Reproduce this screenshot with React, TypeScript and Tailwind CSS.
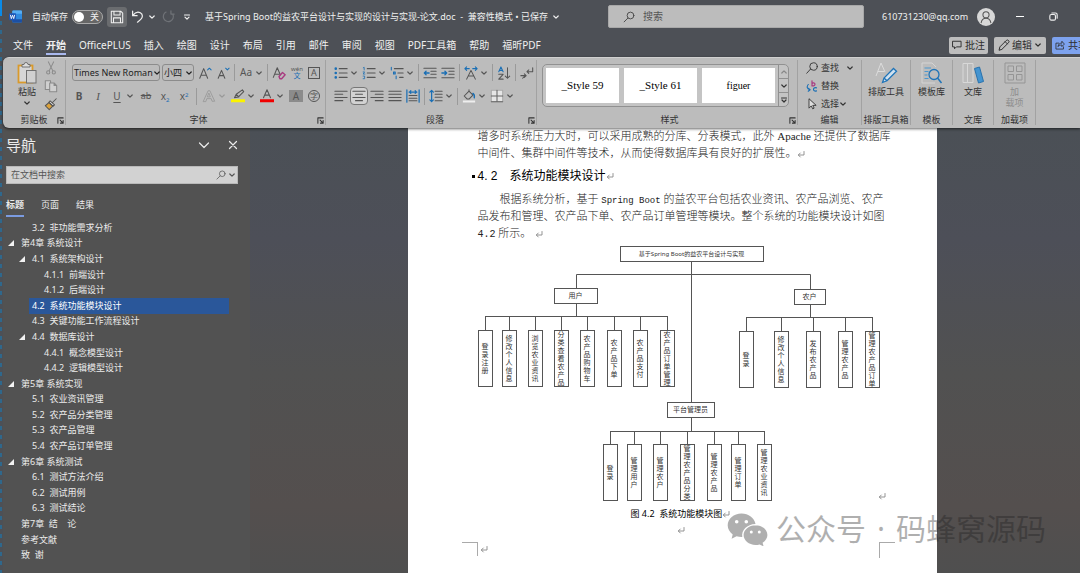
import React from "react";
import type { ReactNode } from "react";

function Svg({ className = "h-3.5 w-3.5", box = "0 0 16 16", children }: { className?: string; box?: string; children: ReactNode }) {
  return (
    <svg viewBox={box} className={"shrink-0 " + className} fill="none" stroke="currentColor" strokeWidth="1.2" strokeLinecap="round" strokeLinejoin="round" aria-hidden="true">
      {children}
    </svg>
  );
}

function Chevron({ className = "h-2 w-2" }: { className?: string }) {
  return (
    <Svg className={className} box="0 0 8 8">
      <path d="M1.8 3l2.2 2.2L6.2 3" />
    </Svg>
  );
}

function Tool({ label, drop, className = "", children }: { label: string; drop?: boolean; className?: string; children: ReactNode }) {
  return (
    <button type="button" aria-label={label} className={"flex shrink-0 items-center gap-0.5 " + className}>
      {children}
      {drop && <Chevron />}
    </button>
  );
}

function Rule() {
  return <span className="h-[17px] w-px shrink-0 bg-[#9a9a9a]" />;
}

function Group({ label, launcher, className, children }: { label: string; launcher?: boolean; className: string; children: ReactNode }) {
  return (
    <section aria-label={label} className={"flex shrink-0 flex-col border-r border-[#a2a2a2] " + className}>
      <div className="flex-1">{children}</div>
      <div className="grid h-2.5 grid-cols-[1fr_auto_1fr] items-center text-[9px] leading-[10px] text-[#333]">
        <span />
        <span className="whitespace-nowrap">{label}</span>
        {launcher ? (
          <button type="button" aria-label={label + "设置"} className="mr-[1px] justify-self-end">
            <Svg className="h-[7px] w-[7px]" box="0 0 8 8">
              <path d="M1 7V1h6M3.5 3.5L7 7M7 4v3H4" />
            </Svg>
          </button>
        ) : (
          <span />
        )}
      </div>
    </section>
  );
}

function Lines({ rows }: { rows: [number, number][] }) {
  return (
    <Svg>
      {rows.map(([a, b], i) => (
        <path key={i} d={`M${a} ${2.5 + i * 3.6}H${b}`} stroke="#555" />
      ))}
    </Svg>
  );
}

const BLUE = "#1a6fb5";

function TitleBar() {
  return (
    <div className="grid h-[33px] grid-cols-[605fr_256fr_216fr] items-center text-[9px] text-[#f0f0f0]">
      <div className="flex items-center pl-1.5">
        <svg viewBox="0 0 24 24" className="h-[13px] w-[13px]" aria-label="Word">
          <rect x="6" y="1" width="18" height="22" rx="2" fill="#2f8be0" />
          <path d="M6 3a2 2 0 012-2h14a2 2 0 012 2v4H6z" fill="#56aef4" />
          <path d="M6 17h18v4a2 2 0 01-2 2H8a2 2 0 01-2-2z" fill="#1c4fa3" />
          <rect x="0" y="6" width="13" height="13" rx="1.5" fill="#1b56b8" />
          <path d="M2.5 9l1.8 7 2.2-6.5L8.7 16l1.8-7" fill="none" stroke="#fff" strokeWidth="1.6" />
        </svg>
        <label htmlFor="autosave" className="ml-2.5 whitespace-nowrap">自动保存</label>
        <button id="autosave" type="button" role="switch" aria-checked="false" className="ml-1 flex h-3.5 w-[31px] items-center justify-between rounded-full border border-[#aaa] bg-[#666] pl-px pr-[3px]">
          <span className="h-2.5 w-2.5 rounded-full bg-white" />
          <span className="leading-none">关</span>
        </button>
        <button type="button" aria-label="保存" className="ml-1 flex h-5 w-5 items-center justify-center rounded-[3px] bg-[#6a6c6f]">
          <Svg>
            <path d="M1.5 1.5h11l2 2v11h-13zM4.5 1.8v4h7v-4M4 14.3V9h8v5.3" />
          </Svg>
        </button>
        <button type="button" aria-label="撤销" className="ml-1 flex items-center gap-1">
          <Svg className="h-[13px] w-[13px]">
            <path d="M2 1.5v5.500h5.500M2.300 6.700C5 3 8.500 1.800 11.500 3.500c3.500 2 3 5.800.5 8l-4 3.500" strokeWidth="1.5" />
          </Svg>
          <Chevron />
        </button>
        <button type="button" aria-label="恢复" className="ml-1.5 text-[#6f7277]">
          <Svg className="h-[13px] w-[13px]">
            <path d="M11 1v4h4M13.500 5.500A6.200 6.200 0 1 1 5 2.500" strokeWidth="1.5" />
          </Svg>
        </button>
        <button type="button" aria-label="自定义快速访问工具栏" className="ml-2">
          <Svg className="h-2 w-2" box="0 0 8 8">
            <path d="M1.500 2h5M2 4.200l2 2 2-2" />
          </Svg>
        </button>
        <button type="button" className="ml-3.5 flex items-center gap-1 whitespace-nowrap">
          <span>基于Spring Boot的益农平台设计与实现的设计与实现-论文.doc&nbsp; - &nbsp;兼容性模式 • 已保存</span>
          <Chevron />
        </button>
      </div>
      <label className="flex h-[23px] items-center rounded-[2px] border border-[#a8a8a8] bg-[#bcbcbc] pl-3.5 text-[#444]">
        <Svg className="h-3 w-3">
          <circle cx="10" cy="6" r="4.500" />
          <path d="M6.500 9.500L1.500 14.500" />
        </Svg>
        <input aria-label="搜索" placeholder="搜索" className="ml-2 min-w-0 flex-1 bg-transparent text-[10px] outline-none placeholder:text-[#555]" />
      </label>
      <div className="flex items-center pl-[18px]">
        <span className="w-[88px] whitespace-nowrap">610731230@qq.com</span>
        <button type="button" aria-label="账户" className="ml-[7px] flex h-[18px] w-[18px] items-center justify-center rounded-full bg-[#d8d8d8] text-[#555]">
          <Svg className="h-3.5 w-3.5">
            <circle cx="8" cy="5.500" r="3.500" />
            <path d="M2.500 14.500c.6-3.500 2.500-5 5.500-5s4.900 1.500 5.500 5" />
          </Svg>
        </button>
        <button type="button" aria-label="最小化" className="ml-[21px] flex h-4 w-2 items-center">
          <span className="block h-px w-full bg-white" />
        </button>
        <button type="button" aria-label="还原" className="ml-[25px]">
          <Svg className="h-[9px] w-[9px]">
            <rect x="1.500" y="4.500" width="10" height="10" rx="2.500" strokeWidth="2" />
            <path d="M5 1.800h6.500a3 3 0 013 3V11" strokeWidth="2" />
          </Svg>
        </button>
      </div>
    </div>
  );
}

const tabs = ["文件", "开始", "OfficePLUS", "插入", "绘图", "设计", "布局", "引用", "邮件", "审阅", "视图", "PDF工具箱", "帮助", "福昕PDF"];

function TabBar() {
  return (
    <div className="flex h-6 items-center">
      <nav className="flex flex-1 items-center gap-[13px] whitespace-nowrap pl-2.5 text-[10px] text-[#f0f0f0]">
        {tabs.map((t) => (
          <button key={t} type="button" className={t === "开始" ? "border-b-2 border-[#a9b8ee] pt-0.5 font-bold leading-[15px]" : "leading-[15px]"}>
            {t}
          </button>
        ))}
      </nav>
      <div className="flex w-[131px] shrink-0 gap-1.5 overflow-hidden text-[10px] text-[#2d2d2d]">
        <button type="button" className="flex h-[17px] w-[39px] shrink-0 items-center justify-center gap-[3px] whitespace-nowrap rounded-[2px] bg-[#bdbdbd]">
          <Svg className="h-2.5 w-2.5">
            <path d="M1.500 2h13v9H7l-3 3v-3H1.500z" strokeWidth="1.500" />
          </Svg>
          批注
        </button>
        <button type="button" className="flex h-[17px] w-[52px] shrink-0 items-center justify-center gap-0.5 whitespace-nowrap rounded-[2px] bg-[#bdbdbd]">
          <Svg className="h-3 w-3">
            <path d="M1.500 14.500l1-4L11 2a2 2 0 013 3l-8.500 8.500zM9.500 3.500l3 3" strokeWidth="1.300" />
          </Svg>
          编辑
          <Chevron />
        </button>
        <button type="button" className="flex h-[17px] w-12 shrink-0 items-center gap-[3px] whitespace-nowrap rounded-[2px] bg-[#7da2ee] pl-[3px]">
          <Svg className="h-2.5 w-2.5">
            <path d="M6 5H1.500v9.500h12V11M5 10c.5-3.500 2.500-5 6-5V2l4 4.500-4 4V8C8.500 8 6.500 8.500 5 10z" strokeWidth="1.300" />
          </Svg>
          共享
        </button>
      </div>
    </div>
  );
}

function FontGroup() {
  return (
    <Group label="字体" launcher className="w-[260px] pl-1.5">
      <div className="mt-1 flex h-[17px] items-center gap-1 text-[#555]">
        <div className="flex gap-0.5 text-[9px] text-[#222]">
          <button type="button" aria-label="字体" className="flex h-[17px] w-[88px] items-center justify-between whitespace-nowrap rounded-[3px] border border-[#8c8c8c] pl-px">
            Times New Roman
            <Chevron />
          </button>
          <button type="button" aria-label="字号" className="flex h-[17px] w-8 items-center justify-between whitespace-nowrap rounded-[3px] border border-[#8c8c8c] pl-px">
            小四
            <Chevron />
          </button>
        </div>
        <Tool label="增大字号">
          <Svg>
            <path d="M2 14L6.500 3 11 14M3.600 10.500h5.800" />
            <path d="M11 4.500l2-2 2 2" stroke={BLUE} />
          </Svg>
        </Tool>
        <Tool label="减小字号">
          <Svg>
            <path d="M2.500 14l3.800-9 3.800 9M3.800 11h5" />
            <path d="M11 2.500l2 2 2-2" stroke={BLUE} />
          </Svg>
        </Tool>
        <Rule />
        <Tool label="更改大小写" drop>
          <span className="w-3.5 text-[10px]">Aa</span>
        </Tool>
        <Rule />
        <Tool label="清除所有格式">
          <Svg>
            <path d="M1.500 13L6 2l3.500 8M3 9.500h5" />
            <path d="M8 12l4-4.500 3 2.500-4 4.500H9z" stroke="#a93a80" strokeWidth="1.600" />
          </Svg>
        </Tool>
        <Tool label="拼音指南">
          <span className="flex w-3.5 flex-col items-center text-[6px] leading-[6px]">
            <span>wén</span>
            <span className="text-[7px] leading-[7px] text-[#1a6fb5]">文</span>
          </span>
        </Tool>
        <Tool label="字符边框">
          <span className="flex h-3 w-3 items-center justify-center border border-[#555] text-[9px] leading-none">A</span>
        </Tool>
      </div>
      <div className="mt-1.5 flex h-[18px] items-center gap-[5px] text-[10px] text-[#555]">
        <Tool label="加粗"><span className="w-3.5 text-center font-bold">B</span></Tool>
        <Tool label="倾斜"><span className="w-3.5 text-center font-['Liberation_Serif',serif] text-[11px] italic">I</span></Tool>
        <Tool label="下划线" drop><span className="w-3.5 text-center underline underline-offset-2">U</span></Tool>
        <Tool label="删除线"><span className="w-3.5 text-center text-[9px] line-through">ab</span></Tool>
        <Tool label="下标"><span className="w-3.5 text-center leading-none">x<sub className="text-[6px] text-[#1a6fb5]">2</sub></span></Tool>
        <Tool label="上标"><span className="w-3.5 text-center leading-none">x<sup className="text-[6px] text-[#1a6fb5]">2</sup></span></Tool>
        <Rule />
        <Tool label="文本效果" drop className="text-[#999]">
          <Svg><path d="M1.500 14L7 2h2l5.500 12h-3l-1-3h-5l-1 3zM6.500 9h3L8 5z" strokeWidth="1" /></Svg>
        </Tool>
        <Tool label="文本突出显示颜色" drop>
          <Svg>
            <path d="M4 10l2-4 7-5 1.500 2-6 6zM6 6l3 3" />
            <path d="M0 13.500h16" stroke="#fbf300" strokeWidth="3.500" strokeLinecap="butt" />
          </Svg>
        </Tool>
        <Tool label="字体颜色" drop>
          <Svg>
            <path d="M4 10L8 0.800 12 10M5.500 7h5" />
            <path d="M0 13.500h16" stroke="#f00000" strokeWidth="3.500" strokeLinecap="butt" />
          </Svg>
        </Tool>
        <Tool label="字符底纹"><span className="flex h-3 w-3.5 items-center justify-center bg-[#8b8b8b] leading-none">A</span></Tool>
        <Tool label="带圈字符"><span className="flex h-3 w-3 items-center justify-center rounded-full border border-[#555] text-[8px] leading-none">字</span></Tool>
      </div>
    </Group>
  );
}

function ParagraphGroup() {
  return (
    <Group label="段落" launcher className="w-[211px] pl-2">
      <div className="mt-1 flex h-[17px] items-center gap-1 text-[#555]">
        <Tool label="项目符号" drop>
          <Svg>
            <path d="M6 3h9M6 8h9M6 13h9" />
            <path d="M2 3h.01M2 8h.01M2 13h.01" stroke={BLUE} strokeWidth="3" />
          </Svg>
        </Tool>
        <Tool label="编号" drop>
          <Svg>
            <path d="M6 3h9M6 8h9M6 13h9" />
            <path d="M1.500 2l1-.5v3M1.300 6.800h1.700l-1.700 2.400h2M1.300 11.500h1.700v3H1.300" stroke={BLUE} strokeWidth="0.900" />
          </Svg>
        </Tool>
        <Tool label="多级列表" drop>
          <Svg>
            <path d="M5 3h10M9 8h6M11 13h4" />
            <path d="M1.500 1.500v3M4 7h2v2H4zM7 11.500v3" stroke={BLUE} />
          </Svg>
        </Tool>
        <Rule />
        <Tool label="减少缩进量">
          <Svg>
            <path d="M1 2.500h14M9 6h6M9 9.500h6M1 13.500h14" />
            <path d="M7 8H1.500M3.500 6l-2 2 2 2" stroke={BLUE} strokeWidth="1.500" />
          </Svg>
        </Tool>
        <Tool label="增加缩进量">
          <Svg>
            <path d="M1 2.500h14M9 6h6M9 9.500h6M1 13.500h14" />
            <path d="M1 8h5.500M4.500 6l2 2-2 2" stroke={BLUE} strokeWidth="1.500" />
          </Svg>
        </Tool>
        <Rule />
        <Tool label="中文版式" drop>
          <Svg>
            <path d="M3 15L8 5l5 10M5 11.500h6" />
            <path d="M1 3h5M3 1L1 3l2 2M10 3h5M13 1l2 2-2 2" stroke={BLUE} />
          </Svg>
        </Tool>
        <Rule />
        <Tool label="排序">
          <Svg>
            <path d="M2 6.500L4.500 1 7 6.500M3 5h3" stroke={BLUE} />
            <path d="M2 9.500h5l-5 5.500h5M12 2v12M9.500 11.500L12 14l2.500-2.500" />
          </Svg>
        </Tool>
        <Rule />
        <Tool label="显示编辑标记">
          <Svg><path d="M1 11h6M5 9l2 2-2 2M14.500 2v4.500H8M10 4.500L8 6.500l2 2M3 14l3-3" /></Svg>
        </Tool>
      </div>
      <div className="mt-1.5 flex h-[18px] items-center gap-1 text-[#555]">
        <Tool label="左对齐"><Lines rows={[[1, 15], [1, 10], [1, 15], [1, 10]]} /></Tool>
        <button type="button" aria-label="居中" aria-pressed="true" className="-mx-0.5 flex h-[18px] w-[18px] shrink-0 items-center justify-center rounded-[4px] border border-[#777] bg-[#d2d2d2]">
          <Lines rows={[[1, 15], [4, 12], [1, 15], [4, 12]]} />
        </button>
        <Tool label="右对齐"><Lines rows={[[1, 15], [6, 15], [1, 15], [6, 15]]} /></Tool>
        <Tool label="两端对齐"><Lines rows={[[1, 15], [1, 15], [1, 15], [1, 15]]} /></Tool>
        <Tool label="分散对齐">
          <Svg>
            <path d="M1 1v14M15 1v14M3.500 3.500h9M4 3.500L5.500 2M4 3.500L5.500 5M12 3.500L10.500 2M12 3.500L10.500 5" stroke={BLUE} strokeWidth="1.400" />
            <path d="M3.500 7.500h9M3.500 10.500h9M3.500 13.500h9" />
          </Svg>
        </Tool>
        <Rule />
        <Tool label="行距" drop>
          <Svg>
            <path d="M7 2.500h8M7 6h8M7 9.500h8M7 13.500h8" />
            <path d="M3 1.500v13M1 3.500l2-2 2 2M1 12.500l2 2 2-2" stroke={BLUE} strokeWidth="1.400" />
          </Svg>
        </Tool>
        <Rule />
        <Tool label="底纹" drop>
          <Svg>
            <path d="M2.500 8L8 2.500l4.500 4.500L8 11.500H6zM8 2.500V1" />
            <path d="M12.500 5c1.500 1 2 2.500 1.500 5" stroke={BLUE} strokeWidth="1.600" />
            <path d="M1 14.200h14" stroke="#eee" strokeWidth="2.200" strokeLinecap="butt" />
          </Svg>
        </Tool>
        <Tool label="边框" drop>
          <Svg>
            <path d="M1.500 1.500h13v13h-13z" fill="#e6e6e6" stroke="#aaa" />
            <path d="M8 1.500v13M1.500 8h13M1.500 14.500h13" stroke="#666" />
          </Svg>
        </Tool>
      </div>
    </Group>
  );
}

function BigTool({ icon, lines, muted }: { icon: ReactNode; lines: string[]; muted?: boolean }) {
  return (
    <button type="button" className={"mx-auto flex flex-col items-center pt-0.5 text-[9px] leading-[11px] " + (muted ? "text-[#8d8d8d]" : "text-[#333]")}>
      {icon}
      <span className="mt-0.5 flex flex-col whitespace-nowrap">
        {lines.map((l) => (
          <span key={l}>{l}</span>
        ))}
      </span>
    </button>
  );
}

function Ribbon() {
  return (
    <div className="relative z-10 flex h-[71px] overflow-hidden rounded-l-[6px] border-t border-[#d0d0d0] bg-[#bcbcbc] py-[2px] pb-[3px] shadow-[0_1px_3px_rgba(0,0,0,0.6)]">
      <Group label="剪贴板" launcher className="w-[63px]">
        <div className="flex pl-[9px]">
          <button type="button" className="flex w-[30px] flex-col items-center pt-0.5 text-[9px] leading-[11px] text-[#333]">
            <svg viewBox="0 0 20 22" className="h-[22px] w-5" aria-hidden="true">
              <rect x="1.500" y="3.500" width="14" height="17" fill="#d6d6d6" stroke="#d99a2b" strokeWidth="1.800" />
              <path d="M5 5V2.500h2a2 2 0 014 0h2V5z" fill="#ddd" stroke="#666" strokeWidth="0.900" />
              <rect x="9.500" y="8.500" width="9.500" height="12.500" fill="#d0d0d0" stroke="#707070" />
            </svg>
            <span className="mt-0.5">粘贴</span>
            <Chevron className="mt-0.5 h-2 w-2" />
          </button>
          <div className="ml-0.5 flex flex-col gap-0.5 text-[#8a8a8a]">
            <Tool label="剪切" className="h-4">
              <Svg><path d="M5 1l5 10M11 1L6 11" /><circle cx="4.800" cy="13" r="1.800" /><circle cx="11.200" cy="13" r="1.800" /></Svg>
            </Tool>
            <Tool label="复制" className="h-4">
              <Svg><path d="M6.500 12H1.500V2h6v2.500M6.500 4.500h5l3 3v7h-8zM11.500 4.500v3h3" fill="#cfcfcf" /></Svg>
            </Tool>
            <Tool label="格式刷" className="h-4 text-[#555]">
              <Svg>
                <path d="M10 6l4-4M7 4.500L12 9l-1.500 1.500-5-4.500z" fill="#eee" />
                <path d="M5.500 6.500L1.500 10l4.500 4.500 4-4z" fill="#dca23a" />
              </Svg>
            </Tool>
          </div>
        </div>
      </Group>
      <FontGroup />
      <ParagraphGroup />
      <Group label="样式" launcher className="w-[261px] pl-[5px]">
        <div className="mt-1 flex h-[43px] w-[247px] rounded-[5px] border border-[#919191] bg-[#c4c4c4]">
          <div className="flex flex-1 gap-[5px] p-[3px] font-['Liberation_Serif',serif] text-[11px] text-black">
            {["_Style 59", "_Style 61", "figuer"].map((s) => (
              <button key={s} type="button" className={"w-[73px] bg-white " + (s === "figuer" ? "text-[10px]" : "")}>{s}</button>
            ))}
          </div>
          <div className="flex w-[11px] flex-col divide-y divide-[#919191] border-l border-[#919191] text-[#333]">
            <button type="button" aria-label="上一行" className="flex flex-1 items-center justify-center text-[#888]"><Chevron className="h-2 w-2 rotate-180" /></button>
            <button type="button" aria-label="下一行" className="flex flex-1 items-center justify-center"><Chevron /></button>
            <button type="button" aria-label="其他" className="flex flex-1 items-center justify-center">
              <Svg className="h-2 w-2" box="0 0 8 8"><path d="M1.500 2h5M2 4l2 2 2-2" /></Svg>
            </button>
          </div>
        </div>
      </Group>
      <Group label="编辑" className="w-16">
        <div className="flex flex-col gap-0.5 pl-2 text-[9px] leading-4 text-[#333]">
          <button type="button" className="flex h-4 items-center gap-[3px]">
            <Svg className="h-3 w-3"><circle cx="10" cy="6" r="5" /><path d="M6 9.500L1 15" /></Svg>
            查找
            <Chevron className="ml-1 h-2 w-2" />
          </button>
          <button type="button" className="flex h-4 items-center gap-[3px]">
            <Svg className="h-3 w-3">
              <path d="M8 1v7M8 5c1-2 4-1.500 4 .7S9 8.500 8 7" stroke="#a93a80" strokeWidth="1.600" />
              <path d="M3 6c-2.500 3-1.500 6 2 7M3 11l2.500 2L3 15M14 10.500c-3-1-4 .5-4 2s1.500 2.800 4 2" stroke={BLUE} strokeWidth="1.500" />
            </Svg>
            替换
          </button>
          <button type="button" className="flex h-4 items-center gap-[3px]">
            <Svg className="h-3 w-3"><path d="M4 1.500v12l3-3 2 4 1.800-1-1.800-3.700h4z" fill="#ddd" /></Svg>
            <span className="flex items-center">选择<Chevron /></span>
          </button>
        </div>
      </Group>
      <Group label="排版工具箱" className="w-[49px]">
        <BigTool
          lines={["排版工具"]}
          icon={
            <svg viewBox="0 0 24 22" className="h-[22px] w-6" fill="none" aria-hidden="true">
              <path d="M2 14L7 1l4 9M4 9.500h6" stroke="#dcdcdc" />
              <path d="M8.500 20.500l1.500-4.500L19.500 6.500l3 2.700L13 18.800zM10 16l3 2.800" fill="#cfe0ee" stroke="#1f74b8" strokeWidth="1.300" />
            </svg>
          }
        />
      </Group>
      <Group label="模板" className="w-[42px]">
        <BigTool
          lines={["模板库"]}
          icon={
            <svg viewBox="0 0 24 22" className="h-[22px] w-6" fill="none" aria-hidden="true">
              <path d="M16 21H3V1h10l4 4" stroke="#d4d4d4" />
              <path d="M5.500 6H12M5.500 9.500h4M5.500 13h3M5.500 16.500h4" stroke="#4a97cf" />
              <circle cx="15" cy="12.500" r="5" stroke="#1f74b8" strokeWidth="1.300" />
              <path d="M18.500 16l4 5" stroke="#1f74b8" strokeWidth="1.500" />
            </svg>
          }
        />
      </Group>
      <Group label="文库" className="w-[41px]">
        <BigTool
          lines={["文库"]}
          icon={
            <svg viewBox="0 0 24 22" className="h-[22px] w-6" fill="none" aria-hidden="true">
              <path d="M2 1.500h4.500v19H2zM6.500 1.500H12v19H6.500z" stroke="#d8d8d8" />
              <path d="M13.500 6.500l5-1.500 4 14.500-5 1.500z" fill="#4494d0" stroke="#2a72ac" />
            </svg>
          }
        />
      </Group>
      <Group label="加载项" className="w-[42px]">
        <BigTool
          muted
          lines={["加", "载项"]}
          icon={
            <svg viewBox="0 0 24 22" className="h-[22px] w-6" fill="none" stroke="#959595" aria-hidden="true">
              <path d="M2 1h20v20H2zM5 4h5.500v5.500H5zM13.500 4H19v5.500h-5.500zM5 12.500h5.500V18H5zM13.500 12.500H19V18h-5.500z" />
            </svg>
          }
        />
      </Group>
    </div>
  );
}

type Entry = { level: 0 | 1 | 2; text: string; open?: boolean; active?: boolean };

const outline: Entry[] = [
  { level: 1, text: "3.2  非功能需求分析" },
  { level: 0, text: "第4章 系统设计", open: true },
  { level: 1, text: "4.1  系统架构设计", open: true },
  { level: 2, text: "4.1.1  前端设计" },
  { level: 2, text: "4.1.2  后端设计" },
  { level: 1, text: "4.2  系统功能模块设计", active: true },
  { level: 1, text: "4.3  关键功能工作流程设计" },
  { level: 1, text: "4.4  数据库设计", open: true },
  { level: 2, text: "4.4.1  概念模型设计" },
  { level: 2, text: "4.4.2  逻辑模型设计" },
  { level: 0, text: "第5章 系统实现", open: true },
  { level: 1, text: "5.1  农业资讯管理" },
  { level: 1, text: "5.2  农产品分类管理" },
  { level: 1, text: "5.3  农产品管理" },
  { level: 1, text: "5.4  农产品订单管理" },
  { level: 0, text: "第6章 系统测试", open: true },
  { level: 1, text: "6.1  测试方法介绍" },
  { level: 1, text: "6.2  测试用例" },
  { level: 1, text: "6.3  测试结论" },
  { level: 0, text: "第7章  结    论" },
  { level: 0, text: "参考文献" },
  { level: 0, text: "致  谢" },
];

const indents = ["w-[15px]", "w-[26px]", "w-[38px]"];

function NavPane() {
  return (
    <aside className="flex w-[247px] shrink-0 flex-col bg-[#525252] pb-2.5 text-[#ececec]">
      <div className="flex h-[38px] items-center pl-[3px] pr-3 pb-1">
        <h2 className="flex-1 text-[15px] leading-5">导航</h2>
        <button type="button" aria-label="任务窗格选项" className="mr-[18px]">
          <Svg className="h-3 w-3" box="0 0 12 12"><path d="M1.500 4L6 8.500 10.500 4" /></Svg>
        </button>
        <button type="button" aria-label="关闭">
          <Svg className="h-2.5 w-2.5" box="0 0 10 10"><path d="M1.500 1.500l7 7M8.500 1.500l-7 7" /></Svg>
        </button>
      </div>
      <label className="ml-[3px] mr-3 flex h-[18px] shrink-0 items-center border border-[#b9b9b9] bg-[#d2d2d2] px-1 text-[#555]">
        <input aria-label="在文档中搜索" placeholder="在文档中搜索" className="min-w-0 flex-1 bg-transparent text-[9px] outline-none placeholder:text-[#555]" />
        <Svg className="h-2.5 w-2.5"><circle cx="10" cy="6" r="4.500" /><path d="M6.500 9.500L1.500 14.500" /></Svg>
        <Chevron className="-mr-[3px] ml-0.5 h-2 w-2" />
      </label>
      <div className="mt-[11px] flex shrink-0 gap-[17px] pb-[3px] pl-[3px] text-[9px]">
        <button type="button" className="h-[22px] border-b-2 border-[#7b9be0] pb-px font-bold">标题</button>
        <button type="button" className="h-[22px] border-b-2 border-transparent pb-px">页面</button>
        <button type="button" className="h-[22px] border-b-2 border-transparent pb-px">结果</button>
      </div>
      <ul className="grid flex-1 auto-rows-fr pr-[21px] text-[9px] leading-[14px]">
        {outline.map((e) => (
          <li key={e.text} className="flex items-stretch">
            <span className={"flex items-center justify-end pr-1 " + indents[e.level]}>
              {e.open && (
                <svg viewBox="0 0 6 6" className="h-1.5 w-1.5" aria-hidden="true"><path d="M6 0v6H0z" fill="#f2f2f2" /></svg>
              )}
            </span>
            <button type="button" className={"flex-1 whitespace-pre pl-[3px] text-left " + (e.active ? "bg-[#2a579a] text-white" : "")}>{e.text}</button>
          </li>
        ))}
      </ul>
    </aside>
  );
}

type Leaf = { x: number; text: string };
type Branch = { x: number; y: number; w: number; title: string; busY: number; leafY: number; leaves: Leaf[] };

const branches: Branch[] = [
  {
    x: 168, y: 46, w: 44, title: "用户", busY: 74, leafY: 88,
    leaves: [
      { x: 77, text: "登录注册" }, { x: 101, text: "修改个人信息" }, { x: 127, text: "浏览农业资讯" }, { x: 153, text: "分类查看农产品" },
      { x: 179, text: "农产品购物车" }, { x: 206, text: "农产品下单" }, { x: 232, text: "农产品支付" }, { x: 259, text: "农产品订单管理" },
    ],
  },
  {
    x: 402, y: 47, w: 32, title: "农户", busY: 75, leafY: 89,
    leaves: [
      { x: 338, text: "登录" }, { x: 373, text: "修改个人信息" }, { x: 405, text: "发布农产品" }, { x: 437, text: "管理农产品" }, { x: 464, text: "管理农产品订单" },
    ],
  },
  {
    x: 283, y: 160, w: 48, title: "平台管理员", busY: 189, leafY: 202,
    leaves: [
      { x: 202, text: "登录" }, { x: 226, text: "管理用户" }, { x: 252, text: "管理农户" }, { x: 279, text: "管理农产品分类" },
      { x: 306, text: "管理农产品" }, { x: 330, text: "管理订单" }, { x: 356, text: "管理农业资讯" },
    ],
  },
];

function Diagram() {
  return (
    <figure className="relative h-[264px] text-[#333]">
      <svg className="absolute inset-0 h-full w-full" stroke="#555" fill="none" aria-hidden="true">
        <path d="M283.500 20V160M168.500 46V32.500H402.500V47" />
        {branches.map((b) => (
          <path
            key={b.title}
            d={
              `M${b.x + 0.5} ${b.y + 15}V${b.busY}M${b.leaves[0].x + 0.5} ${b.busY + 0.5}H${b.leaves[b.leaves.length - 1].x + 0.5}` +
              b.leaves.map((l) => `M${l.x + 0.5} ${b.busY}V${b.leafY}`).join("")
            }
          />
        ))}
      </svg>
      <div className="absolute left-[212px] top-1 flex h-4 w-[144px] items-center justify-center whitespace-nowrap border border-[#555] bg-white text-[6px]">
        基于Spring Boot的益农平台设计与实现
      </div>
      {branches.map((b) => (
        <React.Fragment key={b.title}>
          <div
            className="absolute flex h-4 items-center justify-center whitespace-nowrap border border-[#555] bg-white text-[7px]"
            style={{ left: b.x - b.w / 2, top: b.y, width: b.w }}
          >
            {b.title}
          </div>
          {b.leaves.map((l) => (
            <div
              key={l.x}
              className="absolute flex h-[57px] w-[15px] items-center justify-center border border-[#555] bg-white text-[7px] leading-[8px]"
              style={{ left: l.x - 7, top: b.leafY }}
            >
              <span className="w-[7px] break-all">{l.text}</span>
            </div>
          ))}
        </React.Fragment>
      ))}
    </figure>
  );
}

function Return({ className = "" }: { className?: string }) {
  return (
    <Svg className={"inline-block h-[7px] w-2 text-[#888] " + className} box="0 0 8 7">
      <path d="M7 0.500V4H1.500M3.300 2L1.300 4l2 2" strokeWidth="0.900" />
    </Svg>
  );
}

function DocumentPage() {
  return (
    <article className="relative h-full w-[529px] shrink-0 overflow-hidden bg-white">
      <div className="whitespace-nowrap pl-[70px] font-['Liberation_Serif','Noto_Sans_CJK_SC',serif] text-[11px] font-light leading-[17px] text-[#222]">
        <p>
          增多时系统压力大时，可以采用成熟的分库、分表模式，此外 Apache 还提供了数据库
          <br />
          中间件、集群中间件等技术，从而使得数据库具有良好的扩展性。<Return />
        </p>
        <h1 className="-ml-1.5 mt-1.5 flex items-center font-['Liberation_Sans','Noto_Sans_CJK_SC',sans-serif] text-[12px] font-normal text-black">
          <span className="mr-[3px] h-[3px] w-[3px] bg-black" />
          <span className="w-8">4. 2</span>
          系统功能模块设计
          <Return />
        </h1>
        <p className="mt-1.5">
          <span className="inline-block w-[22px]" />
          根据系统分析，基于 <span className="font-['Liberation_Mono',monospace] text-[9px] font-normal leading-none">Spring Boot</span> 的益农平台包括农业资讯、农产品浏览、农产
          <br />
          品发布和管理、农产品下单、农产品订单管理等模块。整个系统的功能模块设计如图
          <br />
          <span className="font-['Liberation_Mono',monospace] text-[10px] font-normal leading-none">4.2</span> 所示。<Return className="ml-1" />
        </p>
      </div>
      <Diagram />
      <p className="flex items-center pl-[223px] text-[9px] leading-4 text-black">
        图 4.2&nbsp; 系统功能模块图
        <Return />
      </p>
      <p className="flex h-4 items-center pl-[269px]"><Return /></p>
      <div className="mt-1 flex items-start justify-between pl-[54px] pr-[42px]">
        <div className="flex items-center">
          <span className="h-3.5 w-4 border-r border-t border-[#aaa]" />
          <Return className="ml-0.5" />
        </div>
        <span className="h-4 w-4 border-l border-t border-[#aaa]" />
      </div>
      <Return className="absolute left-[470px] top-[365px]" />
    </article>
  );
}

function Watermark() {
  return (
    <div className="absolute bottom-[26px] right-[34px] flex items-center whitespace-nowrap text-[30px] leading-9 text-[#1e1e1e] opacity-35">
      <svg viewBox="0 0 41 33" className="mr-2 h-[33px] w-[41px]" fill="currentColor" aria-hidden="true">
        <path fillRule="evenodd" d="M14.500 0.500C6.800 0.500 0.700 5.800 0.700 12.300c0 3.600 1.900 6.900 5 9.100L4.600 25.800l5-2.500c1.800.5 3.700.8 5.700.7C14.200 17 20 11.300 28.500 11 27.400 5 21.500.5 14.500.5zM9.700 6.900a1.800 1.800 0 100 3.600 1.800 1.800 0 000-3.600zM19.300 6.900a1.800 1.800 0 100 3.600 1.800 1.800 0 000-3.600z" />
        <path fillRule="evenodd" d="M28.500 12.200c-6.600 0-11.900 4.500-11.900 9.900s5.300 9.900 11.900 9.900c1.400 0 2.800-.2 4.100-.6l4 2-1-3.600c2.900-1.800 4.800-4.600 4.800-7.700 0-5.400-5.300-9.900-11.900-9.900zM24.300 17.400a1.500 1.500 0 100 3 1.500 1.500 0 000-3zM32.300 17.400a1.500 1.500 0 100 3 1.500 1.500 0 000-3z" />
      </svg>
      <span>公众号</span>
      <span className="w-[30px] text-center">·</span>
      <span>码蜂窝源码</span>
    </div>
  );
}

export default function App() {
  return (
    <div className="flex h-screen overflow-hidden bg-[#4d5056] font-['Noto_Sans','Noto_Sans_CJK_SC',sans-serif]">
      <div className="flex w-[3px] shrink-0 flex-col">
        <span className="h-4 w-0.5 bg-[#0a8be8]" />
        <span className="w-0.5 flex-1 bg-[repeating-linear-gradient(to_bottom,#4d5056_0px,#4d5056_5px,#2f688c_5px,#2f688c_9px)]" />
      </div>
      <div className="flex min-w-0 flex-1 flex-col">
        <header className="shrink-0">
          <TitleBar />
          <TabBar />
          <Ribbon />
        </header>
        <main className="flex min-h-0 flex-1">
          <NavPane />
          <div className="relative flex flex-1 justify-center overflow-hidden bg-[linear-gradient(to_bottom,#4b5056_0%,#4d4f58_25%,#515151_55%,#544f4e_85%,#4f4f4f_100%)] pl-3.5">
            <DocumentPage />
            <Watermark />
          </div>
        </main>
      </div>
    </div>
  );
}
